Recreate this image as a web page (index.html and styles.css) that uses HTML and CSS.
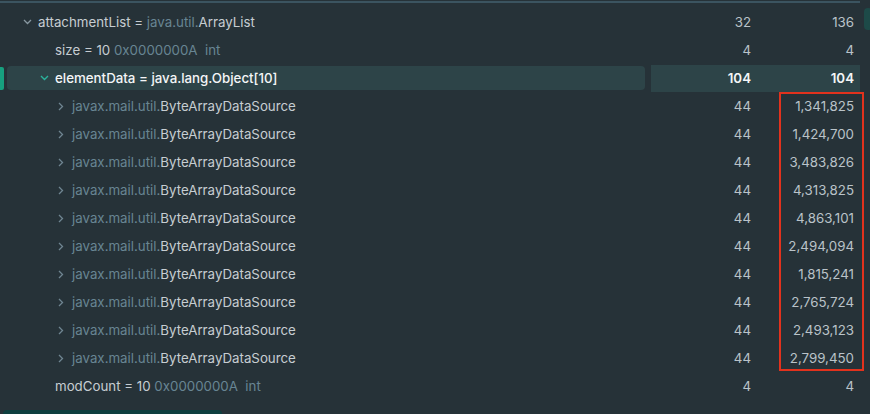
FILE: index.html
```html
<!DOCTYPE html>
<html>
<head>
<meta charset="utf-8">
<link rel="stylesheet" href="styles.css">
</head>
<body>
<div class="topline"></div>
<div class="scrollthumb"></div>
<div class="tree">
  <div class="row">
    <div class="name lvl0"><span class="chev"><svg width="9" height="6" viewBox="0 0 9 6"><path d="M1 1 L4.5 4.5 L8 1" fill="none" stroke="#8797a0" stroke-width="1.3"/></svg></span><span>attachmentList = </span><span class="dim">java.util.</span><span>ArrayList</span></div>
    <div class="num c1">32</div><div class="num c2">136</div>
  </div>
  <div class="row">
    <div class="name lvl1 nochev"><span>size = 10 </span><span class="dim">0x0000000A&nbsp; int</span></div>
    <div class="num c1">4</div><div class="num c2">4</div>
  </div>
  <div class="row sel">
    <div class="marker"></div>
    <div class="name lvl1"><span class="chev"><svg width="9" height="6" viewBox="0 0 9 6"><path d="M1 1 L4.5 4.5 L8 1" fill="none" stroke="#2bb39c" stroke-width="1.4"/></svg></span><span>elementData = java.lang.Object[10]</span></div>
    <div class="num c1">104</div><div class="num c2">104</div>
  </div>
  <div class="row child"><div class="name lvl2"><span class="chev"><svg width="6" height="9" viewBox="0 0 6 9"><path d="M1 1 L4.5 4.5 L1 8" fill="none" stroke="#6f8591" stroke-width="1.3"/></svg></span><span class="dim">javax.mail.util.</span><span>ByteArrayDataSource</span></div><div class="num c1">44</div><div class="num c2">1,341,825</div></div>
  <div class="row child"><div class="name lvl2"><span class="chev"><svg width="6" height="9" viewBox="0 0 6 9"><path d="M1 1 L4.5 4.5 L1 8" fill="none" stroke="#6f8591" stroke-width="1.3"/></svg></span><span class="dim">javax.mail.util.</span><span>ByteArrayDataSource</span></div><div class="num c1">44</div><div class="num c2">1,424,700</div></div>
  <div class="row child"><div class="name lvl2"><span class="chev"><svg width="6" height="9" viewBox="0 0 6 9"><path d="M1 1 L4.5 4.5 L1 8" fill="none" stroke="#6f8591" stroke-width="1.3"/></svg></span><span class="dim">javax.mail.util.</span><span>ByteArrayDataSource</span></div><div class="num c1">44</div><div class="num c2">3,483,826</div></div>
  <div class="row child"><div class="name lvl2"><span class="chev"><svg width="6" height="9" viewBox="0 0 6 9"><path d="M1 1 L4.5 4.5 L1 8" fill="none" stroke="#6f8591" stroke-width="1.3"/></svg></span><span class="dim">javax.mail.util.</span><span>ByteArrayDataSource</span></div><div class="num c1">44</div><div class="num c2">4,313,825</div></div>
  <div class="row child"><div class="name lvl2"><span class="chev"><svg width="6" height="9" viewBox="0 0 6 9"><path d="M1 1 L4.5 4.5 L1 8" fill="none" stroke="#6f8591" stroke-width="1.3"/></svg></span><span class="dim">javax.mail.util.</span><span>ByteArrayDataSource</span></div><div class="num c1">44</div><div class="num c2">4,863,101</div></div>
  <div class="row child"><div class="name lvl2"><span class="chev"><svg width="6" height="9" viewBox="0 0 6 9"><path d="M1 1 L4.5 4.5 L1 8" fill="none" stroke="#6f8591" stroke-width="1.3"/></svg></span><span class="dim">javax.mail.util.</span><span>ByteArrayDataSource</span></div><div class="num c1">44</div><div class="num c2">2,494,094</div></div>
  <div class="row child"><div class="name lvl2"><span class="chev"><svg width="6" height="9" viewBox="0 0 6 9"><path d="M1 1 L4.5 4.5 L1 8" fill="none" stroke="#6f8591" stroke-width="1.3"/></svg></span><span class="dim">javax.mail.util.</span><span>ByteArrayDataSource</span></div><div class="num c1">44</div><div class="num c2">1,815,241</div></div>
  <div class="row child"><div class="name lvl2"><span class="chev"><svg width="6" height="9" viewBox="0 0 6 9"><path d="M1 1 L4.5 4.5 L1 8" fill="none" stroke="#6f8591" stroke-width="1.3"/></svg></span><span class="dim">javax.mail.util.</span><span>ByteArrayDataSource</span></div><div class="num c1">44</div><div class="num c2">2,765,724</div></div>
  <div class="row child"><div class="name lvl2"><span class="chev"><svg width="6" height="9" viewBox="0 0 6 9"><path d="M1 1 L4.5 4.5 L1 8" fill="none" stroke="#6f8591" stroke-width="1.3"/></svg></span><span class="dim">javax.mail.util.</span><span>ByteArrayDataSource</span></div><div class="num c1">44</div><div class="num c2">2,493,123</div></div>
  <div class="row child"><div class="name lvl2"><span class="chev"><svg width="6" height="9" viewBox="0 0 6 9"><path d="M1 1 L4.5 4.5 L1 8" fill="none" stroke="#6f8591" stroke-width="1.3"/></svg></span><span class="dim">javax.mail.util.</span><span>ByteArrayDataSource</span></div><div class="num c1">44</div><div class="num c2">2,799,450</div></div>
  <div class="row">
    <div class="name lvl1 nochev"><span>modCount = 10 </span><span class="dim">0x0000000A&nbsp; int</span></div>
    <div class="num c1">4</div><div class="num c2">4</div>
  </div>
  <div class="redbox"></div>
</div>
<div class="bottombar"></div>
</body>
</html>
```

FILE: styles.css
```css
html, body {
  margin: 0;
  padding: 0;
  background: #263238;
  width: 870px;
  height: 414px;
  overflow: hidden;
  font-family: Inter, "Noto Sans", sans-serif;
  font-size: 13.3px;
  color: #c6cdd2;
}
body { position: relative; }
.topline {
  height: 2px;
  margin-top: 1px;
  width: 860px;
  background: #3b5460;
}
.scrollthumb {
  position: absolute;
  left: 864px;
  top: 8px;
  width: 8px;
  height: 22px;
  border-radius: 4px;
  background: #1d4a48;
}
.tree {
  position: relative;
  padding-top: 5px;
}
.row {
  position: relative;
  display: flex;
  align-items: center;
  height: 28px;
}
.name {
  box-sizing: border-box;
  width: 638px;
  margin-left: 7px;
  margin-right: 6px;
  height: 24px;
  display: flex;
  align-items: center;
  white-space: pre;
  border-radius: 4px;
}
.lvl0 { padding-left: 16px; }
.lvl1 { padding-left: 33px; }
.lvl2 { padding-left: 51px; }
.nochev { padding-left: 48px; }
.chev {
  display: inline-flex;
  width: 15px;
  align-items: center;
}
.lvl2 .chev { width: 14px; }
.dim { color: #688593; }
.num {
  box-sizing: border-box;
  height: 27px;
  display: flex;
  align-items: center;
  justify-content: flex-end;
  color: #bac3c9;
}
.c1 { width: 106px; padding-right: 6px; }
.c2 { width: 103px; padding-right: 6px; }
.sel .name { background: #2d4448; color: #f4f6f7; font-weight: 500; }
.sel .num { background: #2d4448; color: #f4f6f7; font-weight: 600; }
.marker {
  position: absolute;
  left: 0;
  top: 3px;
  width: 4px;
  height: 23px;
  border-radius: 0 2px 2px 0;
  background: #17a07f;
}
.redbox {
  position: absolute;
  left: 779px;
  top: 89px;
  width: 81px;
  height: 275px;
  border: 2px solid #e2321d;
}
.bottombar {
  position: absolute;
  left: 3px;
  top: 410px;
  width: 219px;
  height: 8px;
  border-radius: 4px 4px 0 0;
  background: #0e3f3f;
}
```
